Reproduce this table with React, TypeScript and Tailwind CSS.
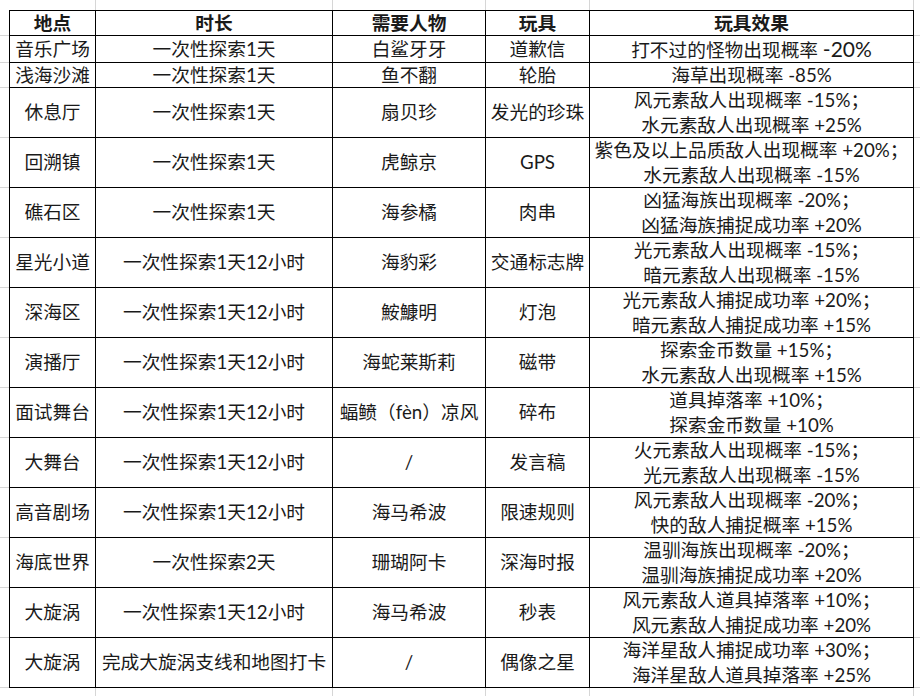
import React from "react";

type Row = { h: string; cells: [string, string, string, string, React.ReactNode[]] };

const rows: Row[] = [
  {
    h: "h-[27px]",
    cells: [
      "音乐广场",
      "一次性探索1天",
      "白鲨牙牙",
      "道歉信",
      [
        <span key="a">
          打不过的怪物出现概率 <span className="text-[21px]">-20%</span>
        </span>,
      ],
    ],
  },
  { h: "h-[25px]", cells: ["浅海沙滩", "一次性探索1天", "鱼不翻", "轮胎", ["海草出现概率 -85%"]] },
  { h: "h-[50px]", cells: ["休息厅", "一次性探索1天", "扇贝珍", "发光的珍珠", ["风元素敌人出现概率 -15%；", "水元素敌人出现概率 +25%"]] },
  { h: "h-[50px]", cells: ["回溯镇", "一次性探索1天", "虎鲸京", "GPS", ["紫色及以上品质敌人出现概率 +20%；", "水元素敌人出现概率 -15%"]] },
  { h: "h-[50px]", cells: ["礁石区", "一次性探索1天", "海参橘", "肉串", ["凶猛海族出现概率 -20%；", "凶猛海族捕捉成功率 +20%"]] },
  { h: "h-[50px]", cells: ["星光小道", "一次性探索1天12小时", "海豹彩", "交通标志牌", ["光元素敌人出现概率 -15%；", "暗元素敌人出现概率 -15%"]] },
  { h: "h-[50px]", cells: ["深海区", "一次性探索1天12小时", "鮟鱇明", "灯泡", ["光元素敌人捕捉成功率 +20%；", "暗元素敌人捕捉成功率 +15%"]] },
  { h: "h-[50px]", cells: ["演播厅", "一次性探索1天12小时", "海蛇莱斯莉", "磁带", ["探索金币数量 +15%；", "水元素敌人出现概率 +15%"]] },
  { h: "h-[50px]", cells: ["面试舞台", "一次性探索1天12小时", "蝠鲼（fèn）凉风", "碎布", ["道具掉落率 +10%；", "探索金币数量 +10%"]] },
  { h: "h-[50px]", cells: ["大舞台", "一次性探索1天12小时", "/", "发言稿", ["火元素敌人出现概率 -15%；", "光元素敌人出现概率 -15%"]] },
  { h: "h-[50px]", cells: ["高音剧场", "一次性探索1天12小时", "海马希波", "限速规则", ["风元素敌人出现概率 -20%；", "快的敌人捕捉概率 +15%"]] },
  { h: "h-[50px]", cells: ["海底世界", "一次性探索2天", "珊瑚阿卡", "深海时报", ["温驯海族出现概率 -20%；", "温驯海族捕捉成功率 +20%"]] },
  { h: "h-[50px]", cells: ["大旋涡", "一次性探索1天12小时", "海马希波", "秒表", ["风元素敌人道具掉落率 +10%；", "风元素敌人捕捉成功率 +20%"]] },
  { h: "h-[50px]", cells: ["大旋涡", "完成大旋涡支线和地图打卡", "/", "偶像之星", ["海洋星敌人捕捉成功率 +30%；", "海洋星敌人道具掉落率 +25%"]] },
];

const widths = ["w-[87px]", "w-[237px]", "w-[153px]", "w-[104px]", "w-[324px]"];
const headers = ["地点", "时长", "需要人物", "玩具", "玩具效果"];

function Cell({ w, first, top, bold, children }: { w: string; first?: boolean; top?: boolean; bold?: boolean; children: React.ReactNode }) {
  return (
    <div
      className={`${w} shrink-0 flex flex-col items-center justify-center border-r border-b border-black ${first ? "border-l" : ""} ${top ? "border-t" : ""} ${bold ? "font-bold" : ""} text-center leading-[25px] whitespace-nowrap`}
    >
      {children}
    </div>
  );
}

export default function App() {
  return (
    <div
      className="w-[920px] h-[696px] bg-white text-[#1a1a1a] text-[18.7px] overflow-hidden flex flex-col"
      style={{ fontFamily: '"Lato", "Noto Sans CJK SC", sans-serif' }}
    >
      <div className="flex h-[10px] shrink-0">
        <div className="w-[9px] shrink-0" />
        {widths.map((w, i) => (
          <div key={i} className={`${w} shrink-0 border-r border-[#d6d6d6]`} />
        ))}
      </div>
      <div className="flex h-[26px] shrink-0">
        <div className="w-[9px] shrink-0 border-b border-[#d6d6d6]" />
        {headers.map((h, i) => (
          <Cell key={i} w={widths[i]} first={i === 0} top bold>
            {h}
          </Cell>
        ))}
        <div className="flex-1 border-b border-[#d6d6d6]" />
      </div>
      {rows.map((r, ri) => (
        <div key={ri} className={`flex ${r.h} shrink-0`}>
          <div className="w-[9px] shrink-0 border-b border-[#d6d6d6]" />
          {r.cells.map((c, ci) => (
            <Cell key={ci} w={widths[ci]} first={ci === 0}>
              {Array.isArray(c) ? c.map((l, li) => <div key={li}>{l}</div>) : c}
            </Cell>
          ))}
          <div className="flex-1 border-b border-[#d6d6d6]" />
        </div>
      ))}
      <div className="flex flex-1">
        <div className="w-[9px] shrink-0" />
        {widths.map((w, i) => (
          <div key={i} className={`${w} shrink-0 border-r border-[#d6d6d6]`} />
        ))}
      </div>
    </div>
  );
}
